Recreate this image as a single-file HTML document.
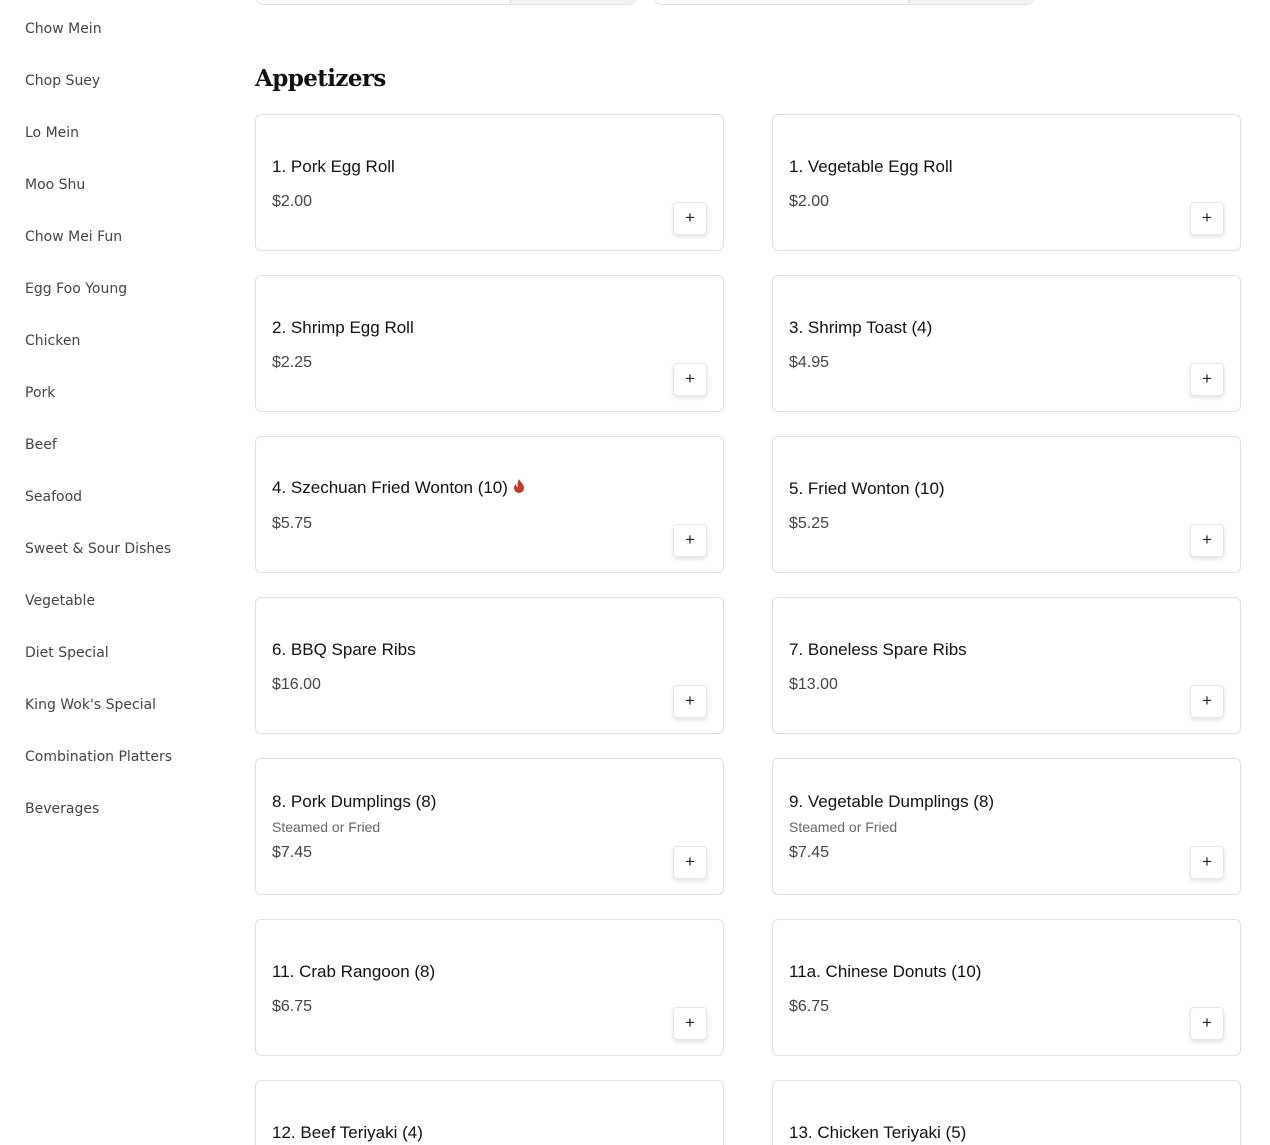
<!DOCTYPE html>
<html><head><meta charset="utf-8"><style>
*{margin:0;padding:0;box-sizing:border-box}
html,body{width:1270px;height:1145px;overflow:hidden}
body{background:#fff;position:relative;font-family:"Liberation Sans",sans-serif}
.nav{position:absolute;left:25px;font-family:"DejaVu Sans",sans-serif;font-size:14px;color:#444;line-height:18px}
.top{position:absolute;top:-20px;height:25px;width:382px;border:1px solid #e2e2e2;border-radius:8px;background:#fff;overflow:hidden}
.top i{position:absolute;right:0;top:0;bottom:0;width:126px;background:#f2f2f2;border-left:1px solid #ddd}
h2{position:absolute;left:255px;top:65px;font-family:"DejaVu Serif","Liberation Serif",serif;font-weight:900;font-size:23px;letter-spacing:-0.6px;color:#111}
.card{position:absolute;width:469px;height:137px;border:1px solid #e0e0e0;border-radius:6px;background:#fff}
.last{height:65px;border-bottom:none;border-radius:6px 6px 0 0}
.t{position:absolute;left:16px;font-size:17px;color:#111;line-height:20px;white-space:nowrap}
.d{position:absolute;left:16px;font-size:14px;color:#666;line-height:18px}
.p{position:absolute;left:16px;font-size:16px;color:#444;line-height:20px}
.b{position:absolute;left:417px;top:87px;width:34px;height:33px;border:1px solid #e6e6e6;border-radius:4px;box-shadow:0 2px 4px rgba(0,0,0,.12);background:#fff;text-align:center;line-height:30px;font-size:17px;color:#222}
</style></head><body>
<div class="nav" style="top:20px">Chow Mein</div>
<div class="nav" style="top:72px">Chop Suey</div>
<div class="nav" style="top:124px">Lo Mein</div>
<div class="nav" style="top:176px">Moo Shu</div>
<div class="nav" style="top:228px">Chow Mei Fun</div>
<div class="nav" style="top:280px">Egg Foo Young</div>
<div class="nav" style="top:332px">Chicken</div>
<div class="nav" style="top:384px">Pork</div>
<div class="nav" style="top:436px">Beef</div>
<div class="nav" style="top:488px">Seafood</div>
<div class="nav" style="top:540px">Sweet &amp; Sour Dishes</div>
<div class="nav" style="top:592px">Vegetable</div>
<div class="nav" style="top:644px">Diet Special</div>
<div class="nav" style="top:696px">King Wok's Special</div>
<div class="nav" style="top:748px">Combination Platters</div>
<div class="nav" style="top:800px">Beverages</div>

<div class="top" style="left:255px"><i></i></div>
<div class="top" style="left:653px"><i></i></div>
<h2>Appetizers</h2>

<div class="card" style="left:255px;top:114px"><div class="t" style="top:42px">1. Pork Egg Roll</div><div class="p" style="top:77px">$2.00</div><div class="b">+</div></div>
<div class="card" style="left:772px;top:114px"><div class="t" style="top:42px">1. Vegetable Egg Roll</div><div class="p" style="top:77px">$2.00</div><div class="b">+</div></div>

<div class="card" style="left:255px;top:275px"><div class="t" style="top:42px">2. Shrimp Egg Roll</div><div class="p" style="top:77px">$2.25</div><div class="b">+</div></div>
<div class="card" style="left:772px;top:275px"><div class="t" style="top:42px">3. Shrimp Toast (4)</div><div class="p" style="top:77px">$4.95</div><div class="b">+</div></div>

<div class="card" style="left:255px;top:436px"><div class="t" style="top:41px">4. Szechuan Fried Wonton (10) <svg width="12" height="14" viewBox="0 0 12 14" style="vertical-align:0"><path d="M6 0C7 3 11 5 11 9a5 5 0 0 1-10 0c0-2 1-3 2-4 0 2 1 3 2 3C4 5 5 2 6 0z" fill="#c0392b"/></svg></div><div class="p" style="top:77px">$5.75</div><div class="b">+</div></div>
<div class="card" style="left:772px;top:436px"><div class="t" style="top:42px">5. Fried Wonton (10)</div><div class="p" style="top:77px">$5.25</div><div class="b">+</div></div>

<div class="card" style="left:255px;top:597px"><div class="t" style="top:42px">6. BBQ Spare Ribs</div><div class="p" style="top:77px">$16.00</div><div class="b">+</div></div>
<div class="card" style="left:772px;top:597px"><div class="t" style="top:42px">7. Boneless Spare Ribs</div><div class="p" style="top:77px">$13.00</div><div class="b">+</div></div>

<div class="card" style="left:255px;top:758px"><div class="t" style="top:33px">8. Pork Dumplings (8)</div><div class="d" style="top:59px">Steamed or Fried</div><div class="p" style="top:84px">$7.45</div><div class="b">+</div></div>
<div class="card" style="left:772px;top:758px"><div class="t" style="top:33px">9. Vegetable Dumplings (8)</div><div class="d" style="top:59px">Steamed or Fried</div><div class="p" style="top:84px">$7.45</div><div class="b">+</div></div>

<div class="card" style="left:255px;top:919px"><div class="t" style="top:42px">11. Crab Rangoon (8)</div><div class="p" style="top:77px">$6.75</div><div class="b">+</div></div>
<div class="card" style="left:772px;top:919px"><div class="t" style="top:42px">11a. Chinese Donuts (10)</div><div class="p" style="top:77px">$6.75</div><div class="b">+</div></div>

<div class="card last" style="left:255px;top:1080px"><div class="t" style="top:42px">12. Beef Teriyaki (4)</div></div>
<div class="card last" style="left:772px;top:1080px"><div class="t" style="top:42px">13. Chicken Teriyaki (5)</div></div>
</body></html>
